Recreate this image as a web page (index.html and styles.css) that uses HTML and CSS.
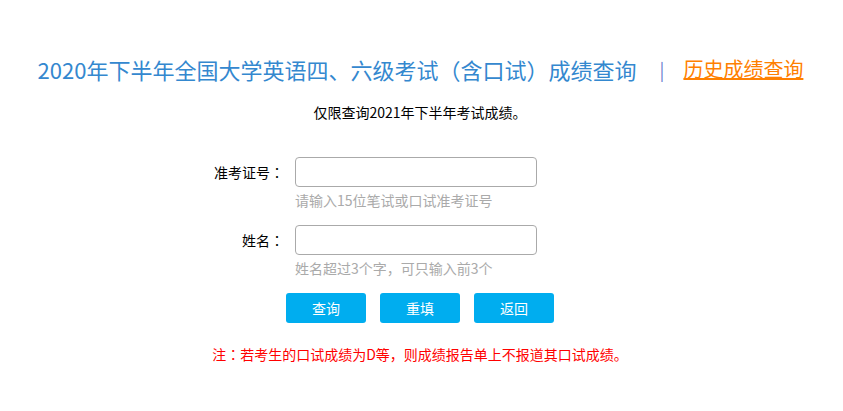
FILE: index.html
```html
<html>
  <head>
    <meta charset="utf-8">
    <title>成绩查询</title>
    <link rel="stylesheet" href="styles.css">
  </head>
  <body>
    <div id="page">
      <div class="title_row">
        <span class="title">2020年下半年全国大学英语四、六级考试<span class="punct">（</span>含口试<span class="punct">）</span>成绩查询</span>
        <span class="title_sep">|</span>
        <a class="history_link" href="#">历史成绩查询</a>
      </div>
      <div class="subtitle">仅限查询2021年下半年考试成绩。</div>
      <form class="query_form">
        <div class="form_row">
          <label class="form_label" for="zkzh">准考证号<span class="punct">：</span></label>
          <input class="form_input" id="zkzh" type="text">
          <div class="form_hint">请输入15位笔试或口试准考证号</div>
        </div>
        <div class="form_row">
          <label class="form_label" for="xm">姓名<span class="punct">：</span></label>
          <input class="form_input" id="xm" type="text">
          <div class="form_hint">姓名超过3个字，可只输入前3个</div>
        </div>
        <div class="button_row">
          <button class="btn" type="button">查询</button>
          <button class="btn" type="reset">重填</button>
          <button class="btn" type="button">返回</button>
        </div>
      </form>
      <div class="note">注<span class="punct">：</span>若考生的口试成绩为D等，则成绩报告单上不报道其口试成绩。</div>
    </div>
  </body>
</html>
```

FILE: styles.css
```css
body {
  background-color: #FFF;
  margin: 0px;
  padding: 0px;
  font-family: "Noto Sans CJK SC", "Microsoft YaHei", sans-serif;
  font-size: 14px;
  color: #000;
}
#page {
  width: 843px;
}
.punct {
  font-family: "Noto Sans CJK TC", sans-serif;
}
.title_row {
  display: flex;
  justify-content: center;
  align-items: center;
  padding: 54px 2px 0 0;
  height: 30px;
  line-height: 30px;
}
.title {
  font-size: 22px;
  color: #3488cf;
}
.title_sep {
  margin: 0 19px 0 23px;
  font-size: 18px;
  color: #6f82d0;
}
.history_link {
  font-size: 20px;
  color: #ff8000;
  text-decoration: underline;
}
.subtitle {
  margin-top: 18px;
  padding-right: 3px;
  line-height: 20px;
  text-align: center;
}
.query_form {
  margin: 35px 0 0 0;
}
.form_row {
  display: grid;
  grid-template-columns: 284px 242px;
  column-gap: 11px;
  margin-bottom: 15px;
}
.form_label {
  text-align: right;
  line-height: 30px;
}
.form_input {
  height: 30px;
  box-sizing: border-box;
  border: 1px solid #aaa;
  border-radius: 4px;
  padding: 0 6px;
  font-family: inherit;
  font-size: 14px;
  outline: none;
}
.form_hint {
  grid-column: 2;
  margin-top: 3px;
  line-height: 20px;
  color: #aaa;
  white-space: nowrap;
}
.button_row {
  display: flex;
  justify-content: center;
  gap: 14px;
  padding-right: 3px;
}
.btn {
  width: 80px;
  height: 30px;
  border: none;
  border-radius: 3px;
  background-color: #00adef;
  color: #FFF;
  font-family: inherit;
  font-size: 14px;
  padding: 0;
}
.note {
  margin-top: 21px;
  padding-right: 3px;
  line-height: 20px;
  text-align: center;
  color: #ff0000;
}
```
